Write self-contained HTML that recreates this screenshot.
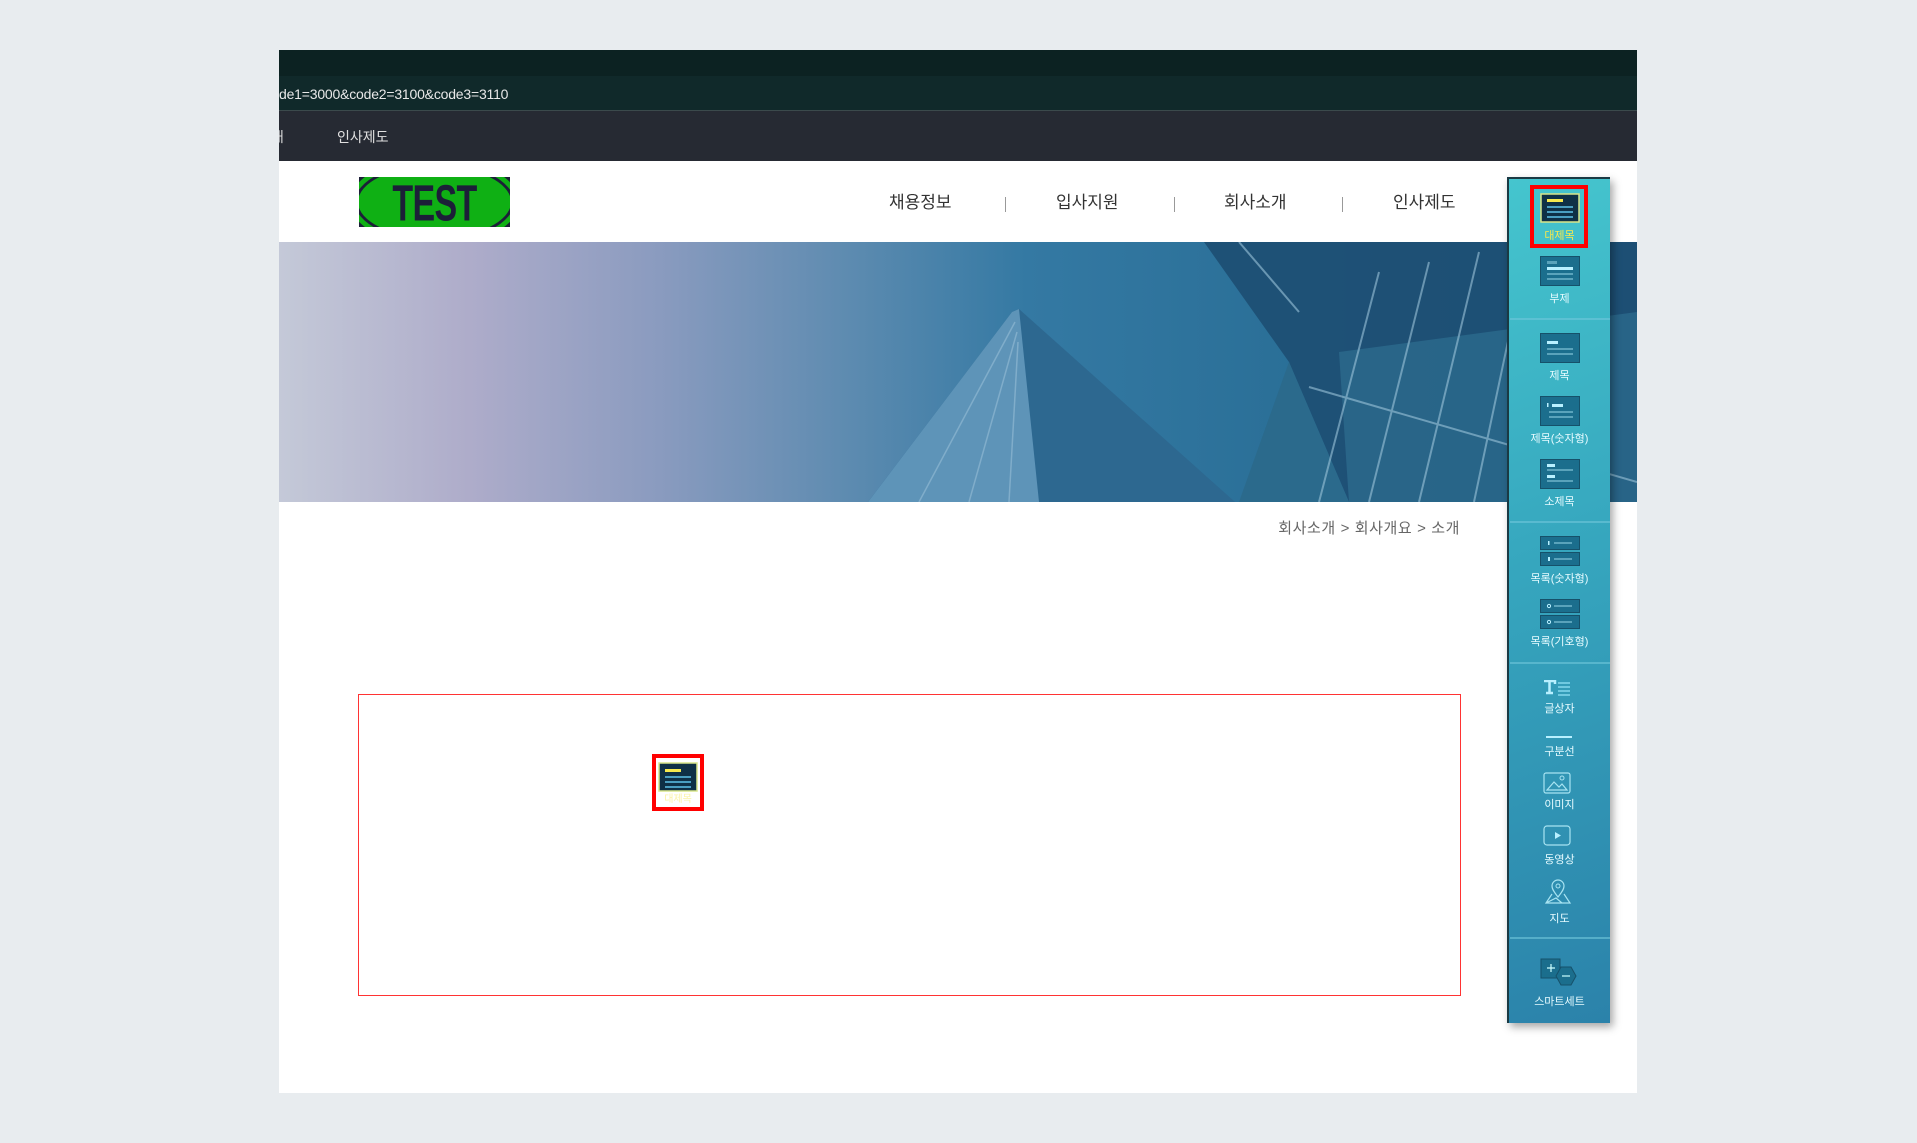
<!DOCTYPE html>
<html><head><meta charset="utf-8">
<style>
*{margin:0;padding:0;box-sizing:border-box}
body{width:1917px;height:1143px;background:#e8ecef;position:relative;overflow:hidden;font-family:"Liberation Sans","Noto Sans CJK KR",sans-serif}
.a{position:absolute}
.lbl{position:absolute;left:0;width:100%;text-align:center;color:#e6fbff;font-size:11px;line-height:12px}
.sep{position:absolute;left:1px;width:100px;height:2px;background:#6fc6da;opacity:.6}
</style></head><body>
<div class="a" style="left:279px;top:50px;width:1358px;height:1043px;background:#fff;overflow:hidden">
  <div class="a" style="left:0;top:0;width:100%;height:26px;background:#0c2222"></div>
  <div class="a" style="left:0;top:26px;width:100%;height:35px;background:#10292a;border-bottom:1px solid #3b4a4c"></div>
  <div class="a" style="left:0;top:34px;color:#e8e8e8;font-size:14px;line-height:20px;letter-spacing:-.2px">de1=3000&amp;code2=3100&amp;code3=3110</div>
  <div class="a" style="left:0;top:61px;width:100%;height:50px;background:#262a33"></div>
  <div class="a" style="left:-8px;top:78px;color:#d8d8d8;font-size:14px;line-height:18px">개</div>
  <div class="a" style="left:58px;top:78px;color:#e0e0e0;font-size:14px;line-height:18px">인사제도</div>
  <!-- logo -->
  <div class="a" style="left:80px;top:127px;width:151px;height:50px;background:#1c1f38;overflow:hidden">
    <div class="a" style="left:-4px;top:-14px;width:159px;height:78px;border-radius:50%;background:#0fb014;border:3px solid #1c1f38;box-shadow:0 0 0 5px #0fb014"></div>
    <div class="a" style="left:0;top:0;width:151px;height:50px;text-align:center;font:bold 50px/52px 'Liberation Sans Narrow','Liberation Sans',sans-serif;color:#1c1f38;transform:scale(.68,1.02);letter-spacing:-1px">TEST</div>
  </div>
  <!-- menu -->
  <div class="a" style="left:610px;top:141px;color:#333;font-size:17px;line-height:24px">채용정보</div>
  <div class="a" style="left:726px;top:147px;width:1px;height:15px;background:#999"></div>
  <div class="a" style="left:777px;top:141px;color:#333;font-size:17px;line-height:24px">입사지원</div>
  <div class="a" style="left:895px;top:147px;width:1px;height:15px;background:#999"></div>
  <div class="a" style="left:945px;top:141px;color:#333;font-size:17px;line-height:24px">회사소개</div>
  <div class="a" style="left:1063px;top:147px;width:1px;height:15px;background:#999"></div>
  <div class="a" style="left:1114px;top:141px;color:#333;font-size:17px;line-height:24px">인사제도</div>
  <!-- banner -->
  <div class="a" style="left:0;top:192px;width:1358px;height:260px;background:linear-gradient(90deg,#c4c9d8 0%,#aeacca 14%,#8a9bbf 28%,#5d8bb0 42%,#3479a3 55%,#2a6f97 75%,#245e86 100%)">
    <svg width="1358" height="260" class="a" style="left:0;top:0">
      <polygon points="925,0 1358,0 1358,260 1070,260 1010,120" fill="#1d4e72" opacity=".9"/>
      <polygon points="1010,120 1070,260 960,260" fill="#2b6a8c"/>
      <polygon points="1060,110 1358,70 1358,260 1070,260" fill="#2d6e90" opacity=".7"/>
      <g stroke="#9cc4da" stroke-width="2" opacity=".6">
        <line x1="1100" y1="30" x2="1040" y2="260"/><line x1="1150" y1="20" x2="1090" y2="260"/>
        <line x1="1200" y1="10" x2="1140" y2="260"/><line x1="1250" y1="0" x2="1195" y2="260"/>
        <line x1="1030" y1="145" x2="1358" y2="240"/>
        <line x1="960" y1="0" x2="1020" y2="70"/>
      </g>
      <polygon points="733,70 740,67 956,260 589,260" fill="#2d6890"/>
      <polygon points="733,70 740,67 760,260 589,260" fill="#5e94b8"/>
      <g stroke="#8fb8d2" stroke-width="1.5" opacity=".7">
        <line x1="736" y1="80" x2="640" y2="260"/><line x1="738" y1="90" x2="690" y2="260"/><line x1="739" y1="100" x2="730" y2="260"/>
      </g>
    </svg>
  </div>
  <div class="a" style="left:900px;top:469px;width:281px;text-align:right;color:#666;font-size:15px;line-height:20px;letter-spacing:.6px">회사소개 &gt; 회사개요 &gt; 소개</div>
  <!-- red box -->
  <div class="a" style="left:79px;top:644px;width:1103px;height:302px;border:1px solid #f33"></div>
  <div class="a" style="left:373px;top:704px;width:52px;height:57px;border:4px solid #f00"></div>
  <svg class="a" style="left:379px;top:712px" width="40" height="32"><rect x="1" y="1" width="38" height="28" fill="#0f3046" stroke="#d9e58a" stroke-width="1.5"/><rect x="7" y="7" width="16" height="3" fill="#f6e84d"/><rect x="7" y="14" width="26" height="2" fill="#4a9ec0"/><rect x="7" y="19" width="26" height="2" fill="#4a9ec0"/><rect x="7" y="24" width="26" height="2" fill="#4a9ec0"/></svg>
  <div class="a" style="left:373px;top:745px;width:52px;text-align:center;color:#f6e84d;font-size:10px;line-height:10px;opacity:.5">대제목</div>
</div>
<!-- sidebar -->
<div class="a" style="left:1507px;top:177px;width:103px;height:846px;background:linear-gradient(160deg,#45c5ce 0%,#36a6be 45%,#2b82aa 100%);border-left:2px solid #1a3a44;border-top:2px solid #1a3a44;box-shadow:3px 4px 8px rgba(0,0,0,.35)">
  <div class="a" style="left:21px;top:6px;width:58px;height:63px;border:4px solid #f00"></div>
  <svg class="a" style="left:31px;top:14px" width="40" height="30"><rect x="1" y="1" width="38" height="28" fill="#0f3046" stroke="#d9e58a" stroke-width="1.5"/><rect x="7" y="6" width="16" height="3" fill="#f6e84d"/><rect x="7" y="13" width="26" height="2" fill="#4a9ec0"/><rect x="7" y="18" width="26" height="2" fill="#4a9ec0"/><rect x="7" y="23" width="26" height="2" fill="#4a9ec0"/></svg>
  <div class="lbl" style="top:51px;color:#f6e84d">대제목</div>
  <svg class="a" style="left:31px;top:77px" width="40" height="30"><rect x="0.5" y="0.5" width="39" height="29" fill="#1b6e8d" stroke="#16516a"/><rect x="7" y="5" width="10" height="3" fill="#5aa3bb"/><rect x="7" y="11" width="26" height="3" fill="#b8f0ff"/><rect x="7" y="17" width="26" height="2" fill="#5aa3bb"/><rect x="7" y="22" width="26" height="2" fill="#5aa3bb"/></svg>
  <div class="lbl" style="top:114px">부제</div>
  <div class="sep" style="top:139px"></div>
  <svg class="a" style="left:31px;top:154px" width="40" height="30"><rect x="0.5" y="0.5" width="39" height="29" fill="#1b6e8d" stroke="#16516a"/><rect x="7" y="8" width="11" height="3" fill="#b8f0ff"/><rect x="7" y="15" width="26" height="2" fill="#5aa3bb"/><rect x="7" y="20" width="26" height="2" fill="#5aa3bb"/></svg>
  <div class="lbl" style="top:191px">제목</div>
  <svg class="a" style="left:31px;top:217px" width="40" height="30"><rect x="0.5" y="0.5" width="39" height="29" fill="#1b6e8d" stroke="#16516a"/><rect x="7" y="7" width="1.5" height="4" fill="#b8f0ff"/><rect x="12" y="8" width="11" height="3" fill="#b8f0ff"/><rect x="9" y="15" width="24" height="2" fill="#5aa3bb"/><rect x="9" y="20" width="24" height="2" fill="#5aa3bb"/></svg>
  <div class="lbl" style="top:254px">제목(숫자형)</div>
  <svg class="a" style="left:31px;top:280px" width="40" height="30"><rect x="0.5" y="0.5" width="39" height="29" fill="#1b6e8d" stroke="#16516a"/><rect x="7" y="5" width="8" height="3" fill="#b8f0ff"/><rect x="7" y="10" width="26" height="2" fill="#5aa3bb"/><rect x="7" y="16" width="8" height="3" fill="#b8f0ff"/><rect x="7" y="21" width="26" height="2" fill="#5aa3bb"/></svg>
  <div class="lbl" style="top:317px">소제목</div>
  <div class="sep" style="top:342px"></div>
  <svg class="a" style="left:31px;top:357px" width="40" height="30"><rect x="0.5" y="0.5" width="39" height="13" fill="#1b6e8d" stroke="#16516a"/><rect x="0.5" y="16.5" width="39" height="13" fill="#1b6e8d" stroke="#16516a"/><rect x="8" y="5" width="1.5" height="4" fill="#b8f0ff"/><rect x="14" y="6" width="18" height="2" fill="#5aa3bb"/><rect x="8" y="21" width="2" height="4" fill="#b8f0ff"/><rect x="14" y="22" width="18" height="2" fill="#5aa3bb"/></svg>
  <div class="lbl" style="top:394px">목록(숫자형)</div>
  <svg class="a" style="left:31px;top:420px" width="40" height="30"><rect x="0.5" y="0.5" width="39" height="13" fill="#1b6e8d" stroke="#16516a"/><rect x="0.5" y="16.5" width="39" height="13" fill="#1b6e8d" stroke="#16516a"/><circle cx="9" cy="7" r="1.6" fill="none" stroke="#b8f0ff"/><rect x="14" y="6" width="18" height="2" fill="#5aa3bb"/><circle cx="9" cy="23" r="1.6" fill="none" stroke="#b8f0ff"/><rect x="14" y="22" width="18" height="2" fill="#5aa3bb"/></svg>
  <div class="lbl" style="top:457px">목록(기호형)</div>
  <div class="sep" style="top:483px"></div>
  <svg class="a" style="left:34px;top:501px" width="30" height="16"><path d="M1 1h11v3M6.5 1v12M3 13h7" stroke="#b8f0ff" stroke-width="2.5" fill="none"/><rect x="15" y="2" width="12" height="2" fill="#6fc9e0"/><rect x="15" y="6" width="12" height="2" fill="#6fc9e0"/><rect x="15" y="10" width="12" height="2" fill="#6fc9e0"/><rect x="15" y="14" width="12" height="2" fill="#6fc9e0"/></svg>
  <div class="lbl" style="top:524px">글상자</div>
  <div class="a" style="left:37px;top:557px;width:26px;height:2px;background:#b8f0ff"></div>
  <div class="lbl" style="top:567px">구분선</div>
  <svg class="a" style="left:34px;top:593px" width="30" height="22"><rect x="1" y="1" width="26" height="20" rx="2" fill="none" stroke="#a8e4f2" stroke-width="1.2"/><path d="M4 18l7-8 5 5 3-3 5 6z" fill="none" stroke="#a8e4f2" stroke-width="1.2"/><circle cx="19" cy="6" r="2" fill="none" stroke="#a8e4f2"/></svg>
  <div class="lbl" style="top:620px">이미지</div>
  <svg class="a" style="left:34px;top:646px" width="30" height="22"><rect x="1" y="1" width="26" height="19" rx="3" fill="none" stroke="#a8e4f2" stroke-width="1.2"/><path d="M12 7v7l6-3.5z" fill="#b8f0ff"/></svg>
  <div class="lbl" style="top:675px">동영상</div>
  <svg class="a" style="left:35px;top:700px" width="28" height="26"><path d="M14 18c-4-5-6-8-6-11a6 6 0 0112 0c0 3-2 6-6 11z" fill="none" stroke="#a8e4f2" stroke-width="1.2"/><circle cx="14" cy="7" r="2" fill="none" stroke="#a8e4f2"/><path d="M8 15l-6 9h24l-6-9M2 24l10-5 6 5" fill="none" stroke="#a8e4f2" stroke-width="1.2"/></svg>
  <div class="lbl" style="top:734px">지도</div>
  <div class="sep" style="top:758px"></div>
  <svg class="a" style="left:31px;top:779px" width="40" height="30"><rect x="1" y="1" width="19" height="19" fill="#1b6e8d" stroke="#16516a"/><path d="M7 10h8M11 6v8" stroke="#cff" stroke-width="1.2"/><polygon points="21,9 31,9 36,18 31,27 21,27 16,18" fill="#1b6e8d" stroke="#16516a"/><path d="M22 18h8" stroke="#cff" stroke-width="1.2"/></svg>
  <div class="lbl" style="top:817px">스마트세트</div>
</div>
</body></html>
